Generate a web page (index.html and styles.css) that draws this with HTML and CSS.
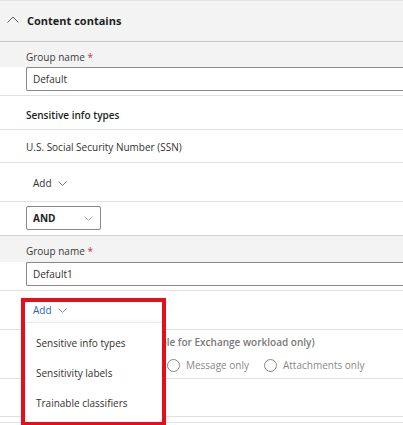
FILE: index.html
```html
<!DOCTYPE html>
<html>
<head>
<meta charset="utf-8">
<link rel="stylesheet" href="styles.css">
</head>
<body>
<div class="panel">
  <div class="header">
    <svg class="chev-up" width="12" height="7" viewBox="0 0 12 7"><path d="M0.5 6.5 L6 1 L11.5 6.5" fill="none" stroke="#605e5c" stroke-width="1"/></svg>
    <span class="header-title">Content contains</span>
  </div>

  <div class="group">
    <div class="group-label">Group name <span class="req">*</span></div>
    <div class="input">Default</div>
  </div>

  <div class="row row-title">Sensitive info types</div>
  <div class="row row-item">U.S. Social Security Number (SSN)</div>
  <div class="row row-add">
    <span class="add">Add
      <svg class="chev" width="9" height="5" viewBox="0 0 9 5"><path d="M0.5 0.5 L4.5 4.5 L8.5 0.5" fill="none" stroke="#8a8886" stroke-width="1"/></svg>
    </span>
  </div>

  <div class="row-op">
    <div class="select">
      <span>AND</span>
      <svg class="chev" width="9" height="5" viewBox="0 0 9 5"><path d="M0.5 0.5 L4.5 4.5 L8.5 0.5" fill="none" stroke="#b3b1af" stroke-width="1"/></svg>
    </div>
  </div>

  <div class="group group2">
    <div class="group-label">Group name <span class="req">*</span></div>
    <div class="input">Default1</div>
  </div>

  <div class="row row-add2">
    <span class="add add-blue">Add
      <svg class="chev" width="9" height="5" viewBox="0 0 9 5"><path d="M0.5 0.5 L4.5 4.5 L8.5 0.5" fill="none" stroke="#7a8fb0" stroke-width="1"/></svg>
    </span>
  </div>

  <div class="row row-detect">
    <div class="detect-title">Check the content in (Available for Exchange workload only)</div>
    <div class="radios">
      <label class="radio"><span class="circle"></span>Email and attachments</label>
      <label class="radio"><span class="circle"></span>Message only</label>
      <label class="radio"><span class="circle"></span>Attachments only</label>
    </div>
  </div>
  <div class="row row-empty"></div>
  <div class="row row-tail"></div>

  <div class="menu">
    <div class="menu-item">Sensitive info types</div>
    <div class="menu-item">Sensitivity labels</div>
    <div class="menu-item">Trainable classifiers</div>
  </div>
  <div class="highlight"></div>
</div>
</body>
</html>
```
FILE: styles.css
```css
html, body {
  margin: 0;
  padding: 0;
  background: #fff;
  overflow: hidden;
}
body {
  font-family: "Open Sans", "Noto Sans", sans-serif;
  font-size: 10px;
  color: #323130;
}
.panel {
  position: relative;
  width: 403px;
  height: 425px;
  overflow: hidden;
}
.header {
  display: flex;
  align-items: center;
  height: 40px;
  background: #f3f3f3;
  border-top: 1px solid #e3e3e3;
  border-bottom: 1px solid #c8c8c8;
  padding-left: 7px;
  box-sizing: content-box;
}
.chev-up {
  display: block;
  margin-top: -3px;
}
.header-title {
  margin-left: 8px;
  font-size: 11px;
  font-weight: 700;
  color: #201f1e;
  line-height: 14px;
}
.group {
  padding-bottom: 4px;
  border-bottom: 1px solid #e1e1e1;
}
.group-label {
  background: #f3f3f3;
  height: 25px;
  box-sizing: border-box;
  padding: 8px 0 0 26px;
  line-height: 14px;
  color: #3b3a39;
}
.req {
  color: #c4314b;
}
.input {
  margin-left: 26px;
  height: 24px;
  box-sizing: border-box;
  border: 1px solid #8a8886;
  border-right: none;
  border-radius: 2px 0 0 2px;
  padding-left: 6px;
  display: flex;
  align-items: center;
  background: #fff;
}
.row {
  border-bottom: 1px solid #e1e1e1;
  padding-left: 26px;
  line-height: 14px;
  box-sizing: border-box;
}
.row-title {
  height: 34px;
  padding-top: 12px;
  font-weight: 600;
  color: #201f1e;
}
.row-item {
  height: 33px;
  padding-top: 10px;
}
.row-add {
  height: 39px;
  padding-top: 13px;
  padding-left: 33px;
}
.add {
  display: inline-flex;
  align-items: center;
  color: #323130;
}
.add .chev {
  margin-left: 6px;
}
.add-blue {
  color: #2b64b5;
}
.row-op {
  height: 33px;
  padding-top: 4px;
  padding-left: 26px;
  box-sizing: border-box;
}
.select {
  width: 75px;
  height: 24px;
  box-sizing: border-box;
  border: 1px solid #8a8886;
  border-radius: 2px;
  display: flex;
  align-items: center;
  justify-content: space-between;
  padding: 0 7px 0 6px;
  font-weight: 700;
  color: #201f1e;
}
.group2 {
  border-top: 1px solid #d2d2d2;
}
.group2 .group-label {
  height: 26px;
}
.row-add2 {
  height: 39px;
  padding-top: 12px;
  padding-left: 33px;
}
.row-detect {
  height: 49px;
  padding-top: 5px;
}
.detect-title {
  font-weight: 600;
  color: #7a7977;
}
.radios {
  display: flex;
  gap: 15px;
  margin-top: 9px;
}
.radio {
  display: flex;
  align-items: center;
  color: #8a8886;
}
.circle {
  width: 11px;
  height: 11px;
  border: 1px solid #8a8886;
  border-radius: 50%;
  margin-right: 6px;
}
.row-empty {
  height: 38px;
}
.row-tail {
  height: 6px;
}
.menu {
  position: absolute;
  left: 26px;
  top: 322px;
  width: 138px;
  height: 100px;
  background: #fff;
  border-top: 1px solid #edebe9;
  box-shadow: 0 2px 6px rgba(0,0,0,0.12);
  padding-top: 5px;
  box-sizing: border-box;
}
.menu-item {
  height: 30px;
  line-height: 30px;
  padding-left: 10px;
  color: #323130;
}
.highlight {
  position: absolute;
  left: 21px;
  top: 298px;
  width: 145px;
  height: 128px;
  border: 4px solid #e3101b;
  box-sizing: border-box;
}
```
